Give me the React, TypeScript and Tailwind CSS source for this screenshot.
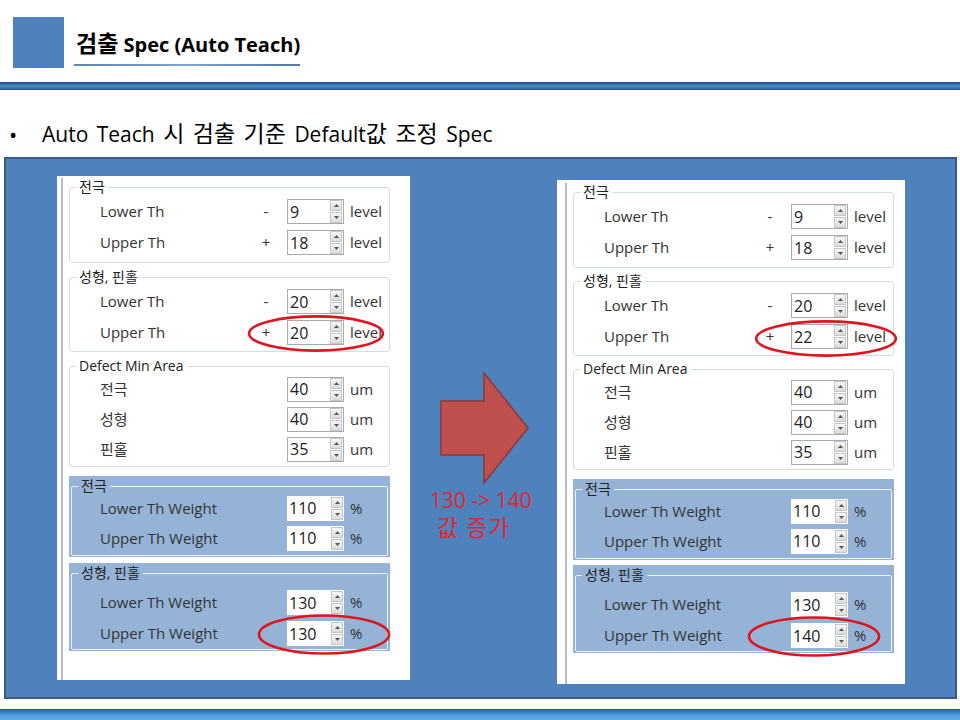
import type { ReactNode } from "react";

type Row = { label: string; sign?: string; value: string; unit: string };

const Spin = ({ value, blue }: { value: string; blue?: boolean }) => (
  <div
    className={`flex h-[25px] w-[57px] items-center bg-white ${
      blue ? "" : "border border-[#a7abb0]"
    }`}
  >
    <span className="flex-1 pl-[2px] text-[16px] leading-none text-[#222]">{value}</span>
    <div className="mr-[1px] flex flex-col gap-[1px]">
      <div className="flex h-[11px] w-[12px] items-center justify-center border border-[#c3c6ca] bg-gradient-to-b from-[#f6f6f6] to-[#dcdcdc]">
        <svg width="5" height="3" viewBox="0 0 5 3">
          <path d="M0 3 L2.5 0 L5 3 Z" fill="#555" />
        </svg>
      </div>
      <div className="flex h-[11px] w-[12px] items-center justify-center border border-[#c3c6ca] bg-gradient-to-b from-[#f6f6f6] to-[#dcdcdc]">
        <svg width="5" height="3" viewBox="0 0 5 3">
          <path d="M0 0 L2.5 3 L5 0 Z" fill="#555" />
        </svg>
      </div>
    </div>
  </div>
);

const RowLine = ({ row, blue, h }: { row: Row; blue?: boolean; h: string }) => (
  <div className={`flex items-center ${h} ${blue ? "pl-[28px]" : "pl-[30px]"}`}>
    <span className="w-[160px] text-[15px] text-[#333]">{row.label}</span>
    <span className="w-[12px] text-center text-[15px] text-[#333]">{row.sign ?? ""}</span>
    <div className="ml-[15px]">
      <Spin value={row.value} blue={blue} />
    </div>
    <span className="ml-[6px] text-[15px] text-[#333]">{row.unit}</span>
  </div>
);

const Legend = ({ children }: { children: ReactNode }) => (
  <legend className="ml-[6px] px-[3px] text-[14px] leading-[18px] text-[#222]">{children}</legend>
);

const Panel = ({
  level2,
  weight2,
  right,
  ellipses,
}: {
  level2: string;
  weight2: string;
  right?: boolean;
  ellipses: ReactNode;
}) => (
  <div
    className={`relative h-[504px] bg-white ${
      right ? "mt-[4px] w-[348px] pl-[8px] pt-[3px]" : "w-[353px] pl-[4px] pt-[2px]"
    }`}
  >
    <div className="flex h-full flex-col border-l-2 border-[#b9bcc0] pl-[6px]">
      <fieldset className="w-[321px] rounded-[3px] border border-[#d3dde5] pb-[4px]">
        <Legend>전극</Legend>
        <RowLine h="h-[31px]" row={{ label: "Lower Th", sign: "-", value: "9", unit: "level" }} />
        <RowLine h="h-[31px]" row={{ label: "Upper Th", sign: "+", value: "18", unit: "level" }} />
      </fieldset>
      <fieldset
        className={`w-[321px] rounded-[3px] border border-[#d3dde5] pb-[3px] ${right ? "mt-[4px]" : "mt-[5px]"}`}
      >
        <Legend>성형, 핀홀</Legend>
        <RowLine h="h-[31px]" row={{ label: "Lower Th", sign: "-", value: "20", unit: "level" }} />
        <RowLine h="h-[31px]" row={{ label: "Upper Th", sign: "+", value: level2, unit: "level" }} />
      </fieldset>
      <fieldset
        className={`w-[321px] rounded-[3px] border border-[#d3dde5] pb-[2px] ${right ? "mt-[4px]" : "mt-[5px]"}`}
      >
        <Legend>Defect Min Area</Legend>
        <div className="-mt-[1px]">
          <RowLine h="h-[30px]" row={{ label: "전극", value: "40", unit: "um" }} />
          <RowLine h="h-[30px]" row={{ label: "성형", value: "40", unit: "um" }} />
          <RowLine h="h-[30px]" row={{ label: "핀홀", value: "35", unit: "um" }} />
        </div>
      </fieldset>
      <div className="mt-[9px] w-[321px] bg-[#95b3d7] px-[2px] pb-[1px] pt-[1px]">
        <fieldset className="rounded-[2px] border border-[#eef3fa] pb-[2px]">
          <Legend>전극</Legend>
          <div className="-mt-[2px]">
            <RowLine blue h="h-[30px]" row={{ label: "Lower Th Weight", value: "110", unit: "%" }} />
            <RowLine blue h="h-[30px]" row={{ label: "Upper Th Weight", value: "110", unit: "%" }} />
          </div>
        </fieldset>
      </div>
      <div
        className={`w-[321px] bg-[#95b3d7] px-[2px] pb-[1px] pt-[1px] ${right ? "mt-[5px]" : "mt-[6px]"}`}
      >
        <fieldset className="rounded-[2px] border border-[#eef3fa]">
          <Legend>성형, 핀홀</Legend>
          <div className="pt-[5px]">
            <RowLine blue h="h-[31px]" row={{ label: "Lower Th Weight", value: "130", unit: "%" }} />
            <RowLine blue h="h-[31px]" row={{ label: "Upper Th Weight", value: weight2, unit: "%" }} />
          </div>
        </fieldset>
      </div>
    </div>
    {ellipses}
  </div>
);

const Ellipse = ({ className }: { className: string }) => (
  <svg className={`pointer-events-none absolute ${className}`} viewBox="0 0 100 40" preserveAspectRatio="none">
    <ellipse
      cx="50"
      cy="20"
      rx="48.5"
      ry="18.5"
      fill="none"
      stroke="#e0141c"
      strokeWidth="2.6"
      vectorEffect="non-scaling-stroke"
    />
  </svg>
);

const Ko = ({ children }: { children: ReactNode }) => (
  <span className="text-[23px] leading-none">{children}</span>
);

export default function App() {
  return (
    <div className="relative h-[720px] w-[960px] overflow-hidden bg-white font-['Open_Sans','Noto_Sans_CJK_KR',sans-serif]">
      {/* header */}
      <div className="flex pl-[13px] pt-[17px]">
        <div className="h-[51px] w-[51px] bg-[#4f81bd]" />
        <div className="ml-[10px] flex flex-col pt-[14px]">
          <h1 className="h-[28px] pl-[2px] text-[20px] font-bold leading-[28px] text-black">
            <span className="text-[23px] leading-none">검출</span> Spec (Auto Teach)
          </h1>
          <div className="mt-[5px] h-[2px] w-[226px] bg-gradient-to-r from-[#5b86b8] via-[#7ea3cf] to-[#4d78aa]" />
        </div>
      </div>
      <div className="mt-[14px] h-[8px] bg-gradient-to-b from-[#174a7e] via-[#4b8cc8] to-[#24578f]" />

      {/* bullet */}
      <div className="mt-[30px] flex h-[28px] items-center text-[21px] leading-[28px] text-black">
        <span className="w-[42px] pl-[9px] text-[22px]">•</span>
        <span className="[word-spacing:3px]">
          Auto Teach <Ko>시</Ko> <Ko>검출</Ko> <Ko>기준</Ko> Default<Ko>값</Ko> <Ko>조정</Ko> Spec
        </span>
      </div>

      {/* main blue panel */}
      <div className="ml-[4px] mt-[9px] flex h-[542px] w-[953px] border-2 border-[#385d8a] bg-[#4f81bd] pl-[51px] pt-[17px]">
        <Panel
          level2="20"
          weight2="130"
          ellipses={
            <>
              <Ellipse className="left-[190px] top-[139px] h-[37px] w-[138px]" />
              <Ellipse className="left-[200px] top-[438px] h-[41px] w-[134px]" />
            </>
          }
        />
        <div className="flex w-[147px] flex-col items-start pt-[196px]">
          <svg className="ml-[30px]" width="90" height="113" viewBox="0 0 90 113">
            <polygon
              points="1,29 44,29 44,1 88,56 44,111 44,83 1,83"
              fill="#c0504d"
              stroke="#8c3836"
              strokeWidth="1.5"
            />
          </svg>
          <span className="ml-[20px] mt-[2px] text-[21px] leading-[26px] text-[#e3262e]">130 -&gt; 140</span>
          <span className="ml-[27px] mt-[1px] text-[23px] leading-[27px] tracking-[1px] text-[#e3262e]">
            값 증가
          </span>
        </div>
        <Panel
          right
          level2="22"
          weight2="140"
          ellipses={
            <>
              <Ellipse className="left-[197px] top-[140px] h-[37px] w-[144px]" />
              <Ellipse className="left-[190px] top-[436px] h-[41px] w-[134px]" />
            </>
          }
        />
      </div>

      {/* bottom bar */}
      <div className="mt-[10px] h-[11px] bg-gradient-to-b from-[#1d5ea6] via-[#4a96d6] to-[#62ace6]" />
    </div>
  );
}
